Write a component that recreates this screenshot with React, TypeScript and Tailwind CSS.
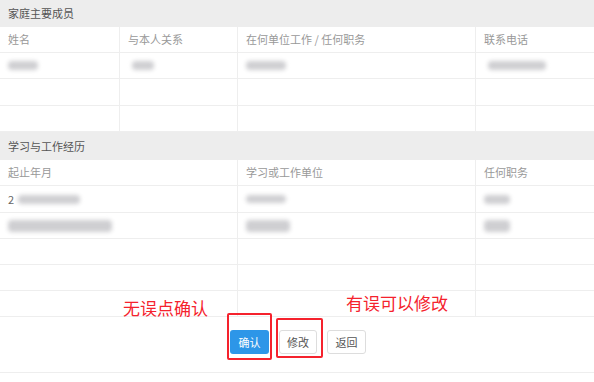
const font = { fontFamily: '"Noto Sans CJK SC", "Liberation Sans", sans-serif' };

const Blur = ({ w, h = 9, className = "" }: { w: number; h?: number; className?: string }) => (
  <span
    className={"inline-block rounded-sm bg-[#cfcfd2] blur-[2px] " + className}
    style={{ width: w, height: h }}
  />
);

const SectionTitle = ({ title, tall = false }: { title: string; tall?: boolean }) => (
  <div className={"flex items-center bg-[#ededed] px-2 text-[11px] text-[#555] " + (tall ? "h-[28px]" : "h-[27px]")}>
    {title}
  </div>
);

const Row = ({
  cols,
  cells,
  head = false,
  tall = false,
}: {
  cols: string;
  cells: React.ReactNode[];
  head?: boolean;
  tall?: boolean;
}) => (
  <div className={"grid border-b border-[#eeeeee] " + cols + (tall ? " h-[27px]" : " h-[26px]")}>
    {cells.map((c, i) => (
      <div
        key={i}
        className={
          "flex items-center px-2 text-[11px] " +
          (head ? "text-[#999]" : "text-[#666]") +
          (i > 0 ? " border-l border-[#eeeeee]" : "")
        }
      >
        {c}
      </div>
    ))}
  </div>
);

export default function App() {
  const famCols = "grid-cols-[119px_118px_238px_1fr]";
  const eduCols = "grid-cols-[237px_238px_1fr]";
  return (
    <div className="relative h-[382px] w-[594px] overflow-hidden bg-white" style={font}>
      <SectionTitle title="家庭主要成员" />
      <Row cols={famCols} head cells={["姓名", "与本人关系", "在何单位工作 / 任何职务", "联系电话"]} />
      <Row
        cols={famCols}
        cells={[<Blur w={30} />, <Blur w={22} className="ml-1" />, <Blur w={40} />, <Blur w={58} className="ml-1" />]}
      />
      <Row cols={famCols} tall cells={["", "", "", ""]} />
      <Row cols={famCols} cells={["", "", "", ""]} />

      <SectionTitle title="学习与工作经历" tall />
      <Row cols={eduCols} head cells={["起止年月", "学习或工作单位", "任何职务"]} />
      <Row
        cols={eduCols}
        tall
        cells={[
          <span className="flex items-center gap-1">
            2<Blur w={62} />
          </span>,
          <Blur w={40} h={8} />,
          <Blur w={26} />,
        ]}
      />
      <Row
        cols={eduCols}
        cells={[<Blur w={104} h={12} />, <Blur w={44} h={12} />, <Blur w={26} h={12} />]}
      />
      <Row cols={eduCols} cells={["", "", ""]} />
      <Row cols={eduCols} cells={["", "", ""]} />
      <Row cols={eduCols} cells={["", "", ""]} />

      <div className="flex h-[56px] items-start gap-[10px] border-b border-[#eeeeee] pl-[230px] pt-[13px]">
        <button className="h-[24px] w-[39px] rounded-[3px] bg-[#2d96e8] text-[11px] text-white">确认</button>
        <button className="h-[24px] w-[38px] rounded-[3px] border border-[#ddd] bg-white text-[11px] text-[#555]">修改</button>
        <button className="h-[24px] w-[39px] rounded-[3px] border border-[#ddd] bg-white text-[11px] text-[#555]">返回</button>
      </div>

      {/* red annotations */}
      <div className="absolute left-[123px] top-[296px] text-[17px] leading-[24px] text-[#f5222d]">无误点确认</div>
      <div className="absolute left-[346px] top-[291px] text-[17px] leading-[24px] text-[#f5222d]">有误可以修改</div>
      <div className="absolute left-[227px] top-[313px] h-[47px] w-[45px] rounded-[2px] border-2 border-[#f5222d]" />
      <div className="absolute left-[276px] top-[318px] h-[40px] w-[47px] rounded-[2px] border-2 border-[#f5222d]" />
    </div>
  );
}
